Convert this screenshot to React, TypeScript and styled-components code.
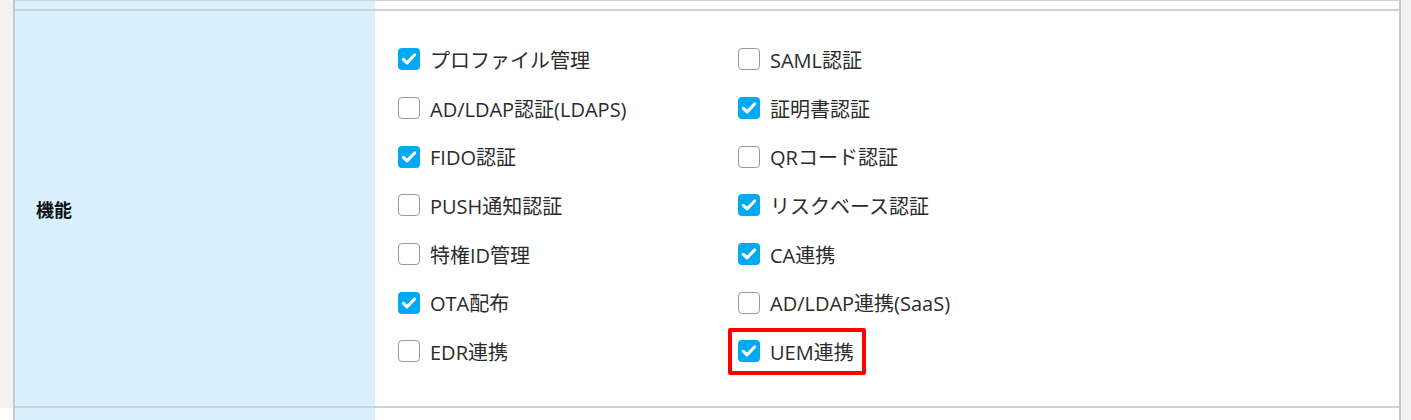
import React from 'react';
import styled, { createGlobalStyle } from 'styled-components';

const GlobalStyle = createGlobalStyle`
  html, body {
    margin: 0;
    padding: 0;
    background: #ffffff;
  }
  body {
    font-family: "Open Sans", "Noto Sans CJK JP", sans-serif;
    color: #333;
  }
`;

const Page = styled.div`
  display: grid;
  grid-template-columns: 13px 1fr 10px;
  width: 1411px;
  height: 420px;
  overflow: hidden;
`;

const Gutter = styled.div<{ full?: boolean }>`
  background: #f2f2f2;
  height: ${p => (p.full ? '420px' : '408px')};
`;

const Table = styled.div`
  display: flex;
  flex-direction: column;
  border-left: 2px solid #c9c9c9;
  border-right: 2px solid #c9c9c9;
`;

const Row = styled.div<{ h?: number; topLine?: boolean }>`
  display: grid;
  grid-template-columns: 360px 1fr;
  ${p => (p.h ? `height: ${p.h}px;` : '')}
  ${p => (p.topLine ? 'border-top: 1px solid #d2d2d2;' : '')}
  border-bottom: 2px solid #c6d5de;
  box-sizing: border-box;

  &:last-child {
    border-bottom: none;
  }
`;

const Head = styled.div`
  background: #d9f0ff;
  display: flex;
  align-items: center;
  padding-left: 21px;
  font-family: "Noto Sans CJK JP", sans-serif;
  font-size: 18px;
  font-weight: 700;
  color: #111;
`;

const Body = styled.div`
  background: #ffffff;
`;

const Options = styled.div`
  display: grid;
  grid-template-columns: 340px 340px;
  grid-auto-rows: 48.7px;
  padding: 24px 0 29px 23px;
`;

const Item = styled.label<{ highlight?: boolean }>`
  display: flex;
  align-items: center;
  gap: 10px;
  font-size: 20px;
  color: #2b2b2b;
  ${p =>
    p.highlight
      ? `
    justify-self: start;
    align-self: center;
    height: 47px;
    box-sizing: border-box;
    border: 4px solid #ff0000;
    border-radius: 2px;
    padding: 0 8px 0 6px;
    margin-left: -10px;
  `
      : ''}
`;

const Box = styled.span<{ checked: boolean }>`
  flex: none;
  width: 22px;
  height: 22px;
  box-sizing: border-box;
  border-radius: 4px;
  display: flex;
  align-items: center;
  justify-content: center;
  background: ${p => (p.checked ? '#00a9f4' : '#fff')};
  border: ${p => (p.checked ? 'none' : '1.5px solid #9a9a9a')};
`;

const Check = () => (
  <svg width="18" height="18" viewBox="0 0 18 18">
    <path d="M3.4 9.4l3.6 3.4 7.6-7.8" fill="none" stroke="#fff" strokeWidth="3.2" strokeLinecap="round" strokeLinejoin="round" />
  </svg>
);

const options: { label: string; checked: boolean; highlight?: boolean }[] = [
  { label: 'プロファイル管理', checked: true },
  { label: 'SAML認証', checked: false },
  { label: 'AD/LDAP認証(LDAPS)', checked: false },
  { label: '証明書認証', checked: true },
  { label: 'FIDO認証', checked: true },
  { label: 'QRコード認証', checked: false },
  { label: 'PUSH通知認証', checked: false },
  { label: 'リスクベース認証', checked: true },
  { label: '特権ID管理', checked: false },
  { label: 'CA連携', checked: true },
  { label: 'OTA配布', checked: true },
  { label: 'AD/LDAP連携(SaaS)', checked: false },
  { label: 'EDR連携', checked: false },
  { label: 'UEM連携', checked: true, highlight: true },
];

export default function App() {
  return (
    <>
      <GlobalStyle />
      <Page>
        <Gutter />
        <Table>
          <Row h={11} topLine>
            <Head />
            <Body />
          </Row>
          <Row h={397}>
            <Head>機能</Head>
            <Body>
              <Options>
                {options.map(o => (
                  <Item key={o.label} highlight={o.highlight}>
                    <Box checked={o.checked}>{o.checked && <Check />}</Box>
                    {o.label}
                  </Item>
                ))}
              </Options>
            </Body>
          </Row>
          <Row h={20}>
            <Head />
            <Body />
          </Row>
        </Table>
        <Gutter full />
      </Page>
    </>
  );
}
